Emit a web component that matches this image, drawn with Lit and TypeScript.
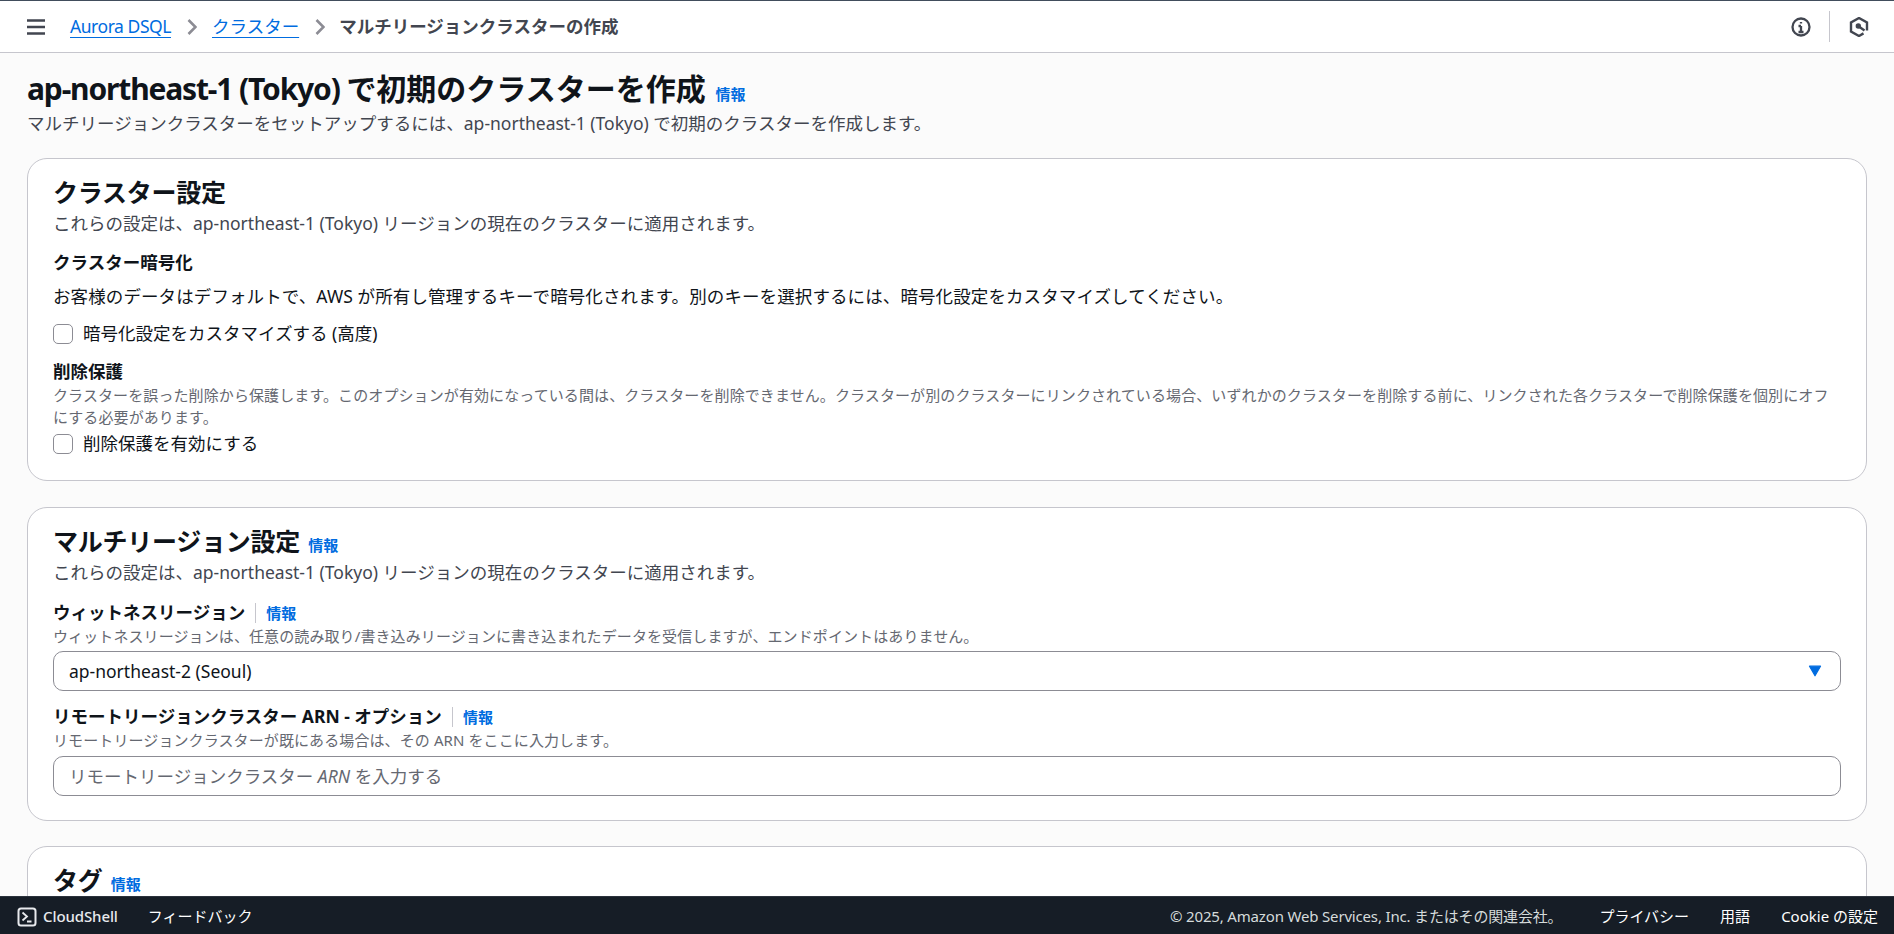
import { LitElement, html, css } from "lit";
import { customElement } from "lit/decorators.js";

@customElement("app-root")
export class AppRoot extends LitElement {
  static styles = css`
    :host {
      display: flex;
      flex-direction: column;
      height: 100vh;
      overflow: hidden;
      background: #fbfbfb;
      color: #0f141a;
      font-family: "Noto Sans", "Noto Sans CJK JP", sans-serif;
      font-size: 17.5px;
      line-height: 25px;
    }
    a { color: #006ce0; text-decoration: none; }
    .top {
      flex: none;
      height: 53px;
      box-sizing: border-box;
      background: #fff;
      border-top: 1px solid #414d5c;
      border-bottom: 1px solid #c6c6cd;
      display: flex;
      align-items: center;
      padding: 0 25px 0 27px;
    }
    .menu { width: 18px; height: 18px; display: block; margin-right: 25px; color: #424650; }
    .crumb { text-decoration: underline; text-underline-offset: 4px; text-decoration-thickness: 1px; }
    .tight { letter-spacing: -0.45px; }
    .chev { width: 10px; height: 16px; margin: 0 15px 0 16px; color: #8c8c94; display: block; }
    .chev.last { margin: 0 14px 0 16px; }
    .current { font-weight: 700; color: #424650; }
    .spacer { flex: 1; }
    .icon { display: block; width: 20px; height: 20px; color: #424650; }
    .divider { width: 1px; height: 31px; background: #c6c6cd; margin: 0 19px 0 18px; }
    main {
      flex: 1;
      min-height: 0;
      overflow: hidden;
      padding: 17px 27px 0;
      box-sizing: border-box;
    }
    h1 {
      margin: 0;
      font-size: 30px;
      line-height: 38px;
      font-weight: 700;
    }
    h1 .lat { letter-spacing: -1.15px; }
    h1 a { font-size: 15px; font-weight: 700; line-height: 20px; margin-left: 2px; }
    h2 a { font-size: 15px; font-weight: 700; line-height: 20px; letter-spacing: 0; margin-left: 2px; }
    .sub { color: #424650; margin-top: 3px; line-height: 25px; }
    .card {
      background: #fff;
      border: 1px solid #c6c6cd;
      border-radius: 20px;
      padding: 18px 25px 24px;
      margin-top: 25px;
    }
    .first { margin-top: 22px; }
    .second { margin-top: 26px; }
    h2 {
      margin: 0;
      font-size: 25px;
      line-height: 30px;
      font-weight: 700;
      letter-spacing: -0.25px;
    }
    .cdesc { color: #424650; line-height: 25px; margin-top: 4px; }
    .label { font-weight: 700; font-size: 17.5px; line-height: 25px; display: flex; align-items: center; }
    .label a { font-size: 15px; line-height: 20px; }
    .label .sep { width: 1px; height: 20px; background: #c6c6cd; margin: 0 10px; }
    .hint { color: #656871; font-size: 15px; line-height: 22px; letter-spacing: 0.1px; }
    .para { letter-spacing: 0.1px; }
    .check { display: flex; align-items: center; gap: 10px; }
    .box {
      width: 20px;
      height: 20px;
      box-sizing: border-box;
      border: 1.5px solid #8c8c94;
      border-radius: 5px;
      background: #fff;
      flex: none;
    }
    .field {
      height: 40px;
      box-sizing: border-box;
      border: 1.25px solid #8c8c94;
      border-radius: 10px;
      background: #fff;
      padding: 0 15px;
      display: flex;
      align-items: center;
      justify-content: space-between;
    }
    .ph { color: #656871; }
    .ph i { font-style: italic; }
    .caret { width: 14px; height: 12px; display: block; margin-right: 3px; color: #006ce0; }
    .s1 { margin-top: 14px; }
    .s1b { margin-top: 15px; }
    .s2 { margin-top: 9px; }
    .s3 { margin-top: 12px; }
    .s4 { margin-top: 13px; }
    .s5 { margin-top: 4px; }
    .s5b { margin-top: 5px; }
    .s6 { margin-top: 13px; }
    .s7 { margin-top: 3px; }
    footer {
      flex: none;
      height: 38px;
      box-sizing: border-box;
      background: #161d26;
      border-top: 1px solid #2b323c;
      color: #fff;
      font-size: 15px;
      display: flex;
      align-items: center;
      padding: 2px 16px 0 17px;
    }
    .cs { display: flex; align-items: center; gap: 6px; font-weight: 500; color: #e8eaed; letter-spacing: -0.1px; }
    .cs svg { display: block; width: 20px; height: 20px; }
    .fb { margin-left: 30px; }
    .copy { color: #d5dbdb; letter-spacing: -0.17px; }
    .fl { margin-left: 31px; }
    .fl.priv { margin-left: 37px; }
  `;

  render() {
    const chev = (last: boolean) =>
      html`<svg class="chev ${last ? "last" : ""}" viewBox="0 0 10 16" fill="none" stroke="currentColor" stroke-width="2.6"><path d="M1.500 1l7 7-7 7"/></svg>`;
    return html`
      <header class="top">
        <svg class="menu" viewBox="0 0 18 18" fill="none" stroke="currentColor" stroke-width="2.5"><path d="M0 2.500h18M0 9h18M0 15.500h18"/></svg>
        <a class="crumb tight" href="#">Aurora DSQL</a>
        ${chev(false)}
        <a class="crumb" href="#">クラスター</a>
        ${chev(true)}
        <span class="current">マルチリージョンクラスターの作成</span>
        <div class="spacer"></div>
        <svg class="icon" viewBox="0 0 20 20" fill="none" stroke="currentColor" stroke-width="2.3"><circle cx="10" cy="10" r="8.500"/><path d="M10 9v6M7.500 9H10M7.500 15h5M10 5v1.600"/></svg>
        <div class="divider"></div>
        <svg class="icon" viewBox="0 0 20 20" fill="none" stroke="currentColor" stroke-width="2.4"><path d="M14.500 16.400 10 19 2 14.500v-9L10 1l8 4.500v8"/><path d="M9.500 9.200 15.500 13.500"/><circle cx="9.300" cy="9" r="2.700" fill="currentColor" stroke="none"/></svg>
      </header>
      <main>
        <h1><span class="lat">ap-northeast-1 (Tokyo) </span>で初期のクラスターを作成 <a href="#">情報</a></h1>
        <div class="sub">マルチリージョンクラスターをセットアップするには、ap-northeast-1 (Tokyo) で初期のクラスターを作成します。</div>

        <section class="card first">
          <h2>クラスター設定</h2>
          <div class="cdesc">これらの設定は、ap-northeast-1 (Tokyo) リージョンの現在のクラスターに適用されます。</div>
          <div class="label s1">クラスター暗号化</div>
          <div class="para s2">お客様のデータはデフォルトで、AWS が所有し管理するキーで暗号化されます。別のキーを選択するには、暗号化設定をカスタマイズしてください。</div>
          <label class="check s3"><span class="box"></span><span>暗号化設定をカスタマイズする (高度)</span></label>
          <div class="label s4">削除保護</div>
          <div class="hint">クラスターを誤った削除から保護します。このオプションが有効になっている間は、クラスターを削除できません。クラスターが別のクラスターにリンクされている場合、いずれかのクラスターを削除する前に、リンクされた各クラスターで削除保護を個別にオフにする必要があります。</div>
          <label class="check s7"><span class="box"></span><span>削除保護を有効にする</span></label>
        </section>

        <section class="card second">
          <h2>マルチリージョン設定 <a href="#">情報</a></h2>
          <div class="cdesc">これらの設定は、ap-northeast-1 (Tokyo) リージョンの現在のクラスターに適用されます。</div>
          <div class="label s1b">ウィットネスリージョン<span class="sep"></span><a href="#">情報</a></div>
          <div class="hint">ウィットネスリージョンは、任意の読み取り/書き込みリージョンに書き込まれたデータを受信しますが、エンドポイントはありません。</div>
          <div class="field s5"><span>ap-northeast-2 (Seoul)</span><svg class="caret" viewBox="0 0 14 12"><path fill="currentColor" d="M1.500 1.200h11L7 10.800z" stroke="currentColor" stroke-linejoin="round" stroke-width="1.200"/></svg></div>
          <div class="label s6">リモートリージョンクラスター ARN - オプション<span class="sep"></span><a href="#">情報</a></div>
          <div class="hint">リモートリージョンクラスターが既にある場合は、その ARN をここに入力します。</div>
          <div class="field s5b"><span class="ph">リモートリージョンクラスター <i>ARN</i> を入力する</span></div>
        </section>

        <section class="card">
          <h2>タグ <a href="#">情報</a></h2>
        </section>
      </main>
      <footer>
        <span class="cs"><svg viewBox="0 0 20 20" fill="none" stroke="currentColor" stroke-width="2"><rect x="1.500" y="1.500" width="17" height="17" rx="2.500"/><path d="M5.500 5.500 10 9.500l-4.500 4M10 14.500h4.500" stroke-width="1.800"/></svg>CloudShell</span>
        <span class="fb">フィードバック</span>
        <div class="spacer"></div>
        <span class="copy">© 2025, Amazon Web Services, Inc. またはその関連会社。</span>
        <span class="fl priv">プライバシー</span>
        <span class="fl">用語</span>
        <span class="fl">Cookie の設定</span>
      </footer>
    `;
  }
}
